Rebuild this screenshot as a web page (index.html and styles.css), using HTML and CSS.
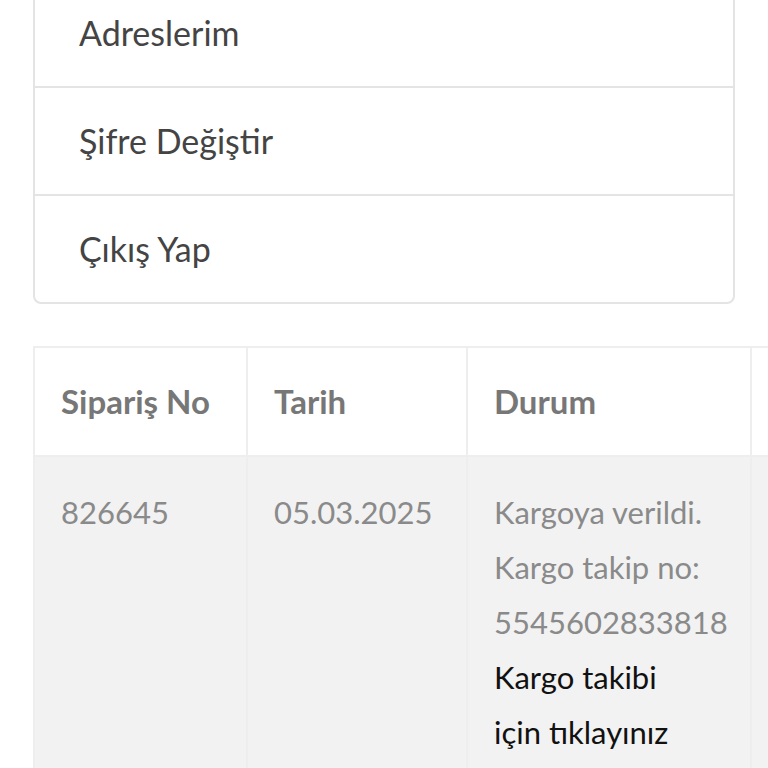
FILE: index.html
```html
<!DOCTYPE html>
<html lang="tr">
<head>
    <meta charset="UTF-8">
    <meta name="viewport" content="width=device-width, initial-scale=1.0">
    <title>Hesabım</title>
    <link rel="stylesheet" href="styles.css">
</head>
<body>
    <div class="page">
        <ul class="account-menu">
            <li><a href="#">Adreslerim</a></li>
            <li><a href="#">Şifre Değiştir</a></li>
            <li><a href="#">Çıkış Yap</a></li>
        </ul>

        <table class="orders">
            <colgroup>
                <col class="col-no">
                <col class="col-date">
                <col class="col-status">
                <col class="col-extra">
            </colgroup>
            <thead>
                <tr>
                    <th>Sipariş No</th>
                    <th>Tarih</th>
                    <th>Durum</th>
                    <th></th>
                </tr>
            </thead>
            <tbody>
                <tr>
                    <td>826645</td>
                    <td>05.03.2025</td>
                    <td>
                        Kargoya verildi.<br>
                        Kargo takip no:<br>
                        5545602833818
                        <a href="#" class="track-link">Kargo takibi<br>için tıklayınız</a>
                    </td>
                    <td></td>
                </tr>
            </tbody>
        </table>
    </div>
</body>
</html>
```

FILE: styles.css
```css
body {
    margin: 0;
    font-family: Lato, "Noto Sans", sans-serif;
    background-color: #fff;
    color: #444;
    overflow: hidden;
}

.page {
    padding: 0 33px;
}

.account-menu {
    list-style: none;
    margin: -22px 0 0 0;
    padding: 0;
    border: 2px solid #e4e4e4;
    border-radius: 8px;
}

.account-menu li {
    border-bottom: 2px solid #e4e4e4;
}

.account-menu li:last-child {
    border-bottom: none;
}

.account-menu a {
    display: block;
    padding: 29px 44px;
    font-size: 34px;
    line-height: 48px;
    color: #444;
    text-decoration: none;
}

.orders {
    margin-top: 42px;
    border-collapse: collapse;
    table-layout: fixed;
    width: 917px;
}

.col-no { width: 213px; }
.col-date { width: 220px; }
.col-status { width: 284px; }
.col-extra { width: 200px; }

.orders th,
.orders td {
    border: 2px solid #eeeeee;
    text-align: left;
    vertical-align: top;
    line-height: 55px;
}

.orders th {
    padding: 26px 26px;
    font-size: 33px;
    font-weight: 700;
    color: #777;
}

.orders td {
    padding: 28px 26px;
    font-size: 31px;
    color: #8a8a8a;
    background-color: #f2f2f2;
}

.track-link {
    display: block;
    color: #111;
    text-decoration: none;
}
```
